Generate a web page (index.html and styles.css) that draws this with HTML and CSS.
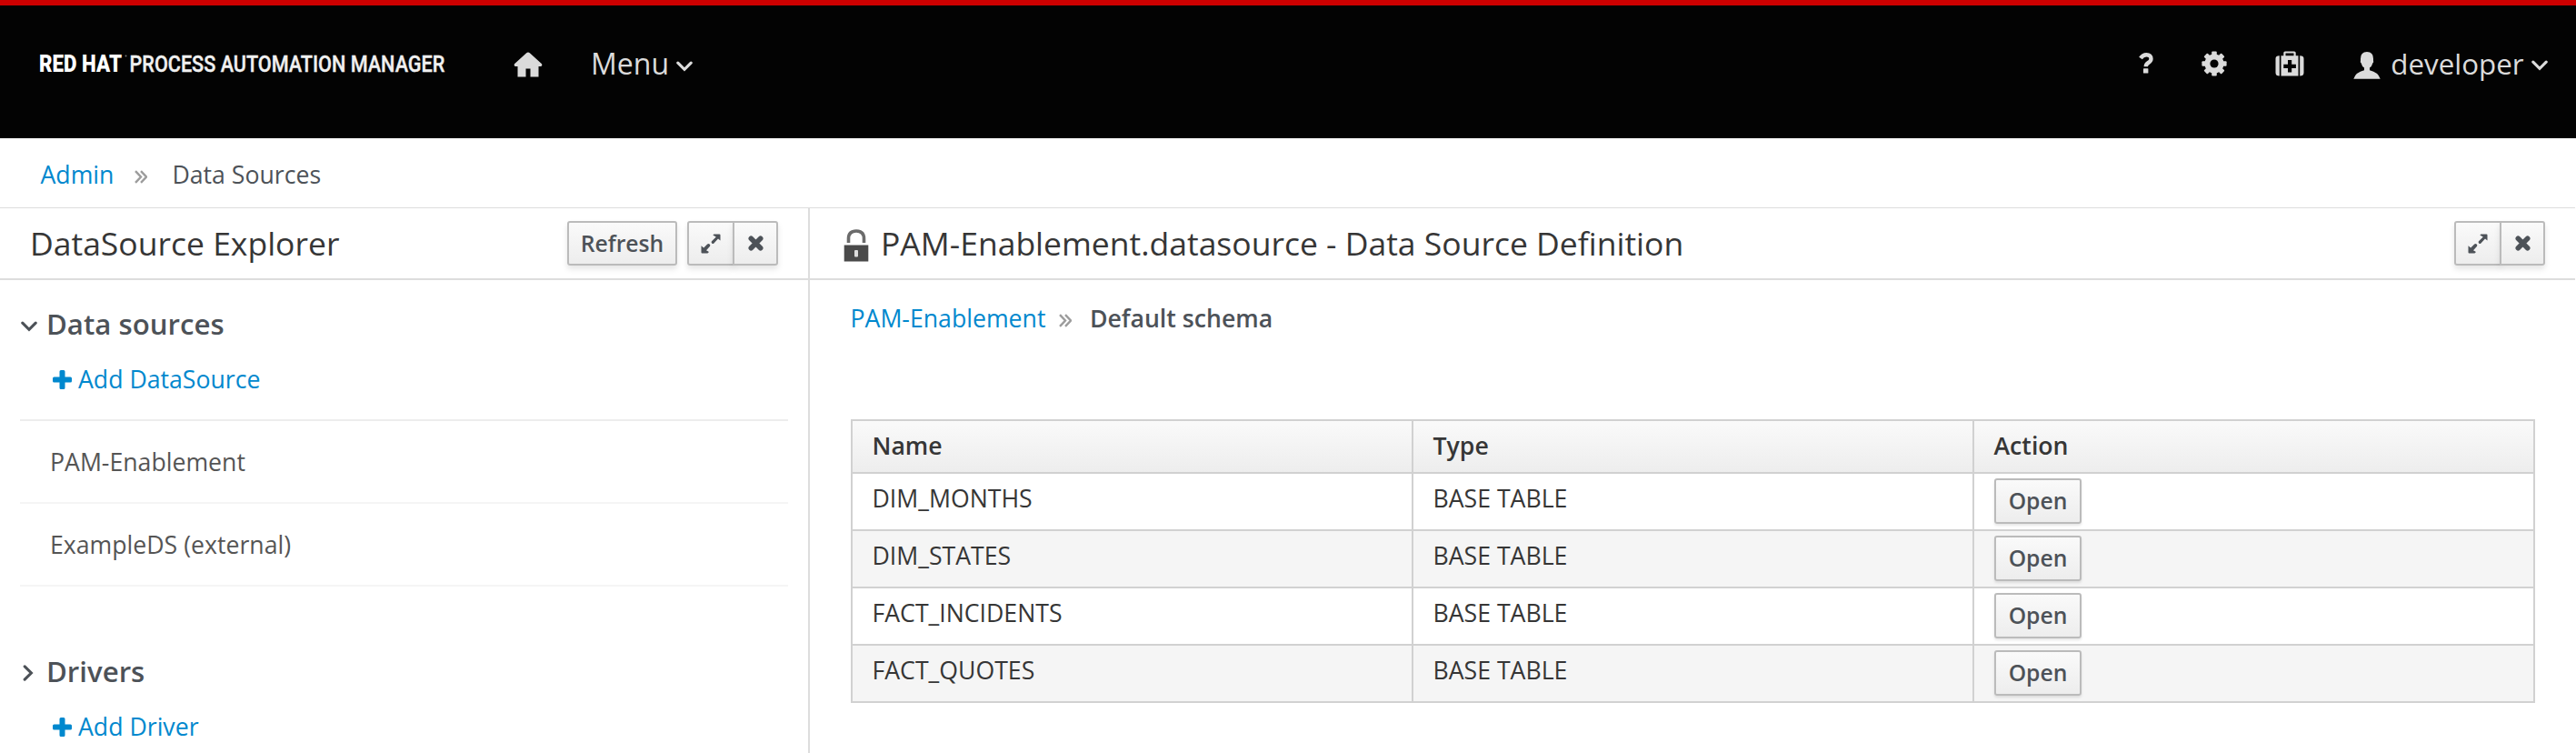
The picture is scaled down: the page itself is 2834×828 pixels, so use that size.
FILE: index.html
```
<!DOCTYPE html>
<html lang="en">
<head>
<meta charset="utf-8">
<title>Data Sources</title>
<link rel="stylesheet" href="styles.css">
</head>
<body>
<svg class="defs" aria-hidden="true">
  <symbol id="down" viewBox="0 0 18 12"><path d="M1.8 2.2 9 9.4 16.2 2.2" fill="none" stroke="currentColor" stroke-width="3.1" stroke-linecap="round"/></symbol>
  <symbol id="right" viewBox="0 0 12 18"><path d="M2.2 1.8 9.4 9 2.2 16.2" fill="none" stroke="currentColor" stroke-width="3.1" stroke-linecap="round"/></symbol>
  <symbol id="double" viewBox="0 0 14 15"><path d="M1 1.2 7 7.5 1 13.8M7 1.2 13 7.5 7 13.8" fill="none" stroke="currentColor" stroke-width="2.4"/></symbol>
  <symbol id="plus" viewBox="0 0 21 21"><path d="M9 0h3q1.5 0 1.5 1.5v6h6q1.5 0 1.5 1.5v3q0 1.500-1.500 1.500h-6v6q0 1.500-1.500 1.500H9q-1.500 0-1.500-1.500v-6h-6Q0 13.500 0 12V9q0-1.500 1.500-1.500h6v-6Q7.500 0 9 0z" fill="currentColor"/></symbol>
  <symbol id="expand" viewBox="0 0 22 22"><path d="M14.500 .5H20.500q1 0 1 1V7.500L19 5.500 14.200 10.800Q13.200 11.500 12.200 10.500 11 9.300 12 8.200L16.800 3.400 13.300 1.500zM7.500 21.500H1.500q-1 0-1-1V13.200L3.200 15.600 7.200 11.500Q8.500 10.500 9.700 11.600 11 12.800 9.900 14L6 18.200 9 20z" fill="currentColor"/></symbol>
  <symbol id="close" viewBox="0 0 17 17"><path d="M3.300 3.300 13.700 13.700M13.700 3.300 3.300 13.700" fill="none" stroke="currentColor" stroke-width="5.600" stroke-linecap="round"/></symbol>
</svg>

<header class="masthead">
  <svg class="brand" width="450" height="30" viewBox="0 0 450 30" role="img" aria-label="Red Hat Process Automation Manager">
    <text class="brand-strong" transform="translate(0 24) scale(.837 1)">RED HAT</text>
    <circle cx="95.500" cy="6.500" r="1" fill="#777"/>
    <text class="brand-name" transform="translate(99.500 24) scale(.81 1)">PROCESS AUTOMATION MANAGER</text>
  </svg>
  <svg class="home" width="32" height="28" viewBox="0 0 32 28"><path d="M14.200 1.200Q16 -.4 17.800 1.200L31 13.200Q32 15.500 30 16H27.500V27.500H18.500V18.500H13.500V27.500H4.500V16H2Q0 15.500 1 13.200z" fill="currentColor"/></svg>
  <a class="nav-menu"><span>Menu</span><svg width="18" height="12"><use href="#down"/></svg></a>
  <nav class="utilities">
    <svg class="help" width="16" height="23" viewBox="0 0 16 23"><path d="M2 6Q4.500 2.300 8.400 2.300 13.500 2.300 13.500 6.800 13.500 9.200 10.500 11 7.800 12.700 7.800 15.300" fill="none" stroke="currentColor" stroke-width="4.400"/><rect x="5" y="17.200" width="5.400" height="5.300" rx=".6" fill="currentColor"/></svg>
    <svg class="gear" width="28" height="28" viewBox="0 0 28 28"><g fill="currentColor"><g id="teeth"><rect x="11.200" y=".4" width="5.600" height="27.200" rx="1"/><rect x=".4" y="11.200" width="27.200" height="5.600" rx="1"/></g><use href="#teeth" transform="rotate(45 14 14)"/><circle cx="14" cy="14" r="10.600"/></g><circle cx="14" cy="14" r="4.600" fill="#030303"/></svg>
    <svg class="kit" width="32" height="28" viewBox="0 0 32 28"><path d="M4.800 5.300v22.200Q.5 27.500 .5 24V8.500Q.5 5.300 4.800 5.300zM27.200 5.300v22.200q4.300 0 4.300-3.500V8.500Q31.500 5.300 27.200 5.300z" fill="currentColor"/><path d="M6.500 5.300H9.300V2Q9.300.5 11 .5H21Q22.700.5 22.700 2V5.300H25.500V27.500H6.500zM11.500 5.300H20.500V2.600H11.500z" fill="currentColor" fill-rule="evenodd"/><path d="M14 10h4.200v4.700h4.700v4.200h-4.700v4.700H14v-4.700H9.300v-4.200H14z" fill="#030303"/></svg>
    <svg class="user" width="30" height="30" viewBox="0 0 30 30"><path d="M15 0Q22 0 22 7.500V9.500Q22.800 11.500 21.300 12.500 20.500 16 18 17.500V20.300Q27.500 22.500 29.700 29.800H.3Q2.500 22.500 12 20.300V17.500Q9.500 16 8.700 12.500 7.200 11.500 8 9.500V7.500Q8 0 15 0z" fill="currentColor"/></svg>
    <span class="user-name">developer</span>
    <svg width="18" height="12"><use href="#down"/></svg>
  </nav>
</header>

<div class="crumbs"><a>Admin</a><svg width="14" height="15"><use href="#double"/></svg><span>Data Sources</span></div>

<main class="workspace">
  <section class="explorer">
    <div class="pane-head">
      <h1>DataSource Explorer</h1>
      <button class="btn refresh">Refresh</button>
      <div class="btn-group"><button class="btn"><svg width="22" height="22"><use href="#expand"/></svg></button><button class="btn"><svg width="17" height="17"><use href="#close"/></svg></button></div>
    </div>
    <div class="tree">
      <h2><svg width="18" height="12"><use href="#down"/></svg><span>Data sources</span></h2>
      <a class="add"><svg width="21" height="21"><use href="#plus"/></svg><span>Add DataSource</span></a>
      <ul>
        <li>PAM-Enablement</li>
        <li>ExampleDS (external)</li>
      </ul>
      <h2 class="collapsed"><svg width="12" height="18"><use href="#right"/></svg><span>Drivers</span></h2>
      <a class="add"><svg width="21" height="21"><use href="#plus"/></svg><span>Add Driver</span></a>
    </div>
  </section>

  <section class="editor">
    <div class="pane-head">
      <svg class="lock" width="28" height="36" viewBox="0 0 28 36"><path d="M5.500 15V10.500Q5.500 2 14 2T22.500 10.500V15" fill="none" stroke="#6b6b6b" stroke-width="3.600"/><rect x=".7" y="17.500" width="26.600" height="18" fill="#4a4a4a"/><rect x="12" y="23" width="4" height="7.500" rx="1" fill="#ddd"/></svg>
      <h1>PAM-Enablement.datasource - Data Source Definition</h1>
      <div class="btn-group"><button class="btn"><svg width="22" height="22"><use href="#expand"/></svg></button><button class="btn"><svg width="17" height="17"><use href="#close"/></svg></button></div>
    </div>
    <div class="schema-path"><a>PAM-Enablement</a><svg width="14" height="15"><use href="#double"/></svg><strong>Default schema</strong></div>
    <table>
      <colgroup><col class="col-name"><col class="col-type"><col></colgroup>
      <thead><tr><th>Name</th><th>Type</th><th>Action</th></tr></thead>
      <tbody>
        <tr><td>DIM_MONTHS</td><td>BASE TABLE</td><td class="action"><button class="btn open">Open</button></td></tr>
        <tr><td>DIM_STATES</td><td>BASE TABLE</td><td class="action"><button class="btn open">Open</button></td></tr>
        <tr><td>FACT_INCIDENTS</td><td>BASE TABLE</td><td class="action"><button class="btn open">Open</button></td></tr>
        <tr><td>FACT_QUOTES</td><td>BASE TABLE</td><td class="action"><button class="btn open">Open</button></td></tr>
      </tbody>
    </table>
  </section>
</main>
</body>
</html>
```
FILE: styles.css
```
* { box-sizing: border-box; }

body {
  margin: 0;
  width: 2834px;
  height: 828px;
  overflow: hidden;
  background: #fff;
  color: #4d5258;
  font: 26.67px/36px "Open Sans", sans-serif;
}

svg { display: block; flex: none; }
.defs { display: none; }
a { color: #0088ce; }
h1, h2, ul { margin: 0; padding: 0; font-weight: 400; }

.masthead {
  display: flex;
  align-items: flex-start;
  height: 152px;
  border-top: 6px solid #c00;
  background: #030303;
  color: #dbdbdb;
  font-size: 32px;
  line-height: 44px;
}

.brand { margin: 49px 0 0 43px; font-family: Roboto, sans-serif; font-size: 26.7px; fill: #fff; }
.brand-strong { font-weight: 900; }
.brand-name { font-weight: 500; fill: #f0f0f0; stroke: #f0f0f0; stroke-width: .4px; }
.home { margin: 51px 0 0 72px; }
.nav-menu { display: flex; align-items: center; gap: 8px; margin: 42px 0 0 53px; color: inherit; }
.nav-menu svg { margin-top: 5px; }
.utilities { display: flex; align-items: flex-start; margin: 42px 31.5px 0 auto; }
.utilities svg { margin-top: 18px; }
.utilities .help { margin: 10px 53px 0 0; }
.utilities .gear { margin: 8px 53px 0 0; }
.utilities .kit { margin: 8px 54px 0 0; }
.utilities .user { margin: 9px 11px 0 0; }
.user-name { margin-right: 8px; font-size: 31.3px; }

.crumbs { display: flex; align-items: center; height: 76px; padding: 4px 0 0 44.5px; }
.crumbs svg, .schema-path svg { color: #9c9c9c; }
.crumbs svg { margin: 4px 27px 0 23px; }

.workspace { display: flex; width: 2833px; height: 600px; border-top: 1px solid #ddd; }
.explorer { width: 891px; border-right: 2px solid #ddd; }
.editor { flex: 1; }

.pane-head { display: flex; align-items: center; height: 79px; border-bottom: 2px solid #ddd; }
.pane-head h1 { flex: 1; color: #363636; font-size: 35.5px; line-height: 50px; white-space: nowrap; margin-bottom: 2px; }
.explorer .pane-head { padding: 0 33px; }
.editor .pane-head { padding: 0 33px 0 37px; }
.lock { margin: 5px 13px 0 0; }

.btn {
  display: flex;
  align-items: center;
  justify-content: center;
  height: 49px;
  padding: 0;
  border: 2px solid #bbb;
  border-radius: 3px;
  background: linear-gradient(#fafafa, #ededed);
  box-shadow: 0 4px 6px rgba(3, 3, 3, .1);
  color: #4d5258;
  font: 600 24.7px/32px "Open Sans", sans-serif;
}
.refresh { width: 121px; margin-right: 11px; }
.btn-group { display: flex; }
.btn-group .btn:first-child { width: 52px; border-radius: 3px 0 0 3px; }
.btn-group .btn:last-child { width: 50px; margin-left: -2px; border-radius: 0 3px 3px 0; }

.tree { padding: 26px 22px 0; }
.tree h2 { display: flex; align-items: center; height: 44px; font-size: 31.2px; font-weight: 600; }
.tree h2 svg { margin: 5px 10px 0 1px; }
.tree .collapsed { margin-top: 71px; }
.tree .collapsed svg { margin: 4px 14px 0 3px; }
.add { display: flex; align-items: center; height: 36px; margin-top: 21px; padding-left: 36px; gap: 7px; }
.tree ul { margin-top: 26px; border-top: 2px solid #ededed; list-style: none; }
.tree li { height: 91px; padding: 27px 0 0 33px; border-bottom: 2px solid #f5f5f5; color: #555; }

.schema-path { display: flex; align-items: center; height: 36px; margin: 24px 0 0 44.5px; }
.schema-path svg { margin: 4px 20px 0 14.5px; }
.schema-path strong { font-weight: 600; }

table { width: 1853px; margin: 93px 0 0 45px; border-collapse: collapse; table-layout: fixed; color: #363636; }
.col-name, .col-type { width: 617px; }
th, td { padding: 0 0 0 21.5px; border: 2px solid #d1d1d1; text-align: left; vertical-align: top; }
thead tr { height: 58px; background: linear-gradient(#fafafa, #ededed); }
th { padding-top: 9px; font-weight: 600; }
tbody tr { height: 63px; }
tbody tr:nth-child(even) { background: #f5f5f5; }
td { padding-top: 9px; }
.action { padding: 5px 0 0 22px; }
.open { width: 96px; height: 50px; box-shadow: 0 2px 3px rgba(3, 3, 3, .1); }
```
